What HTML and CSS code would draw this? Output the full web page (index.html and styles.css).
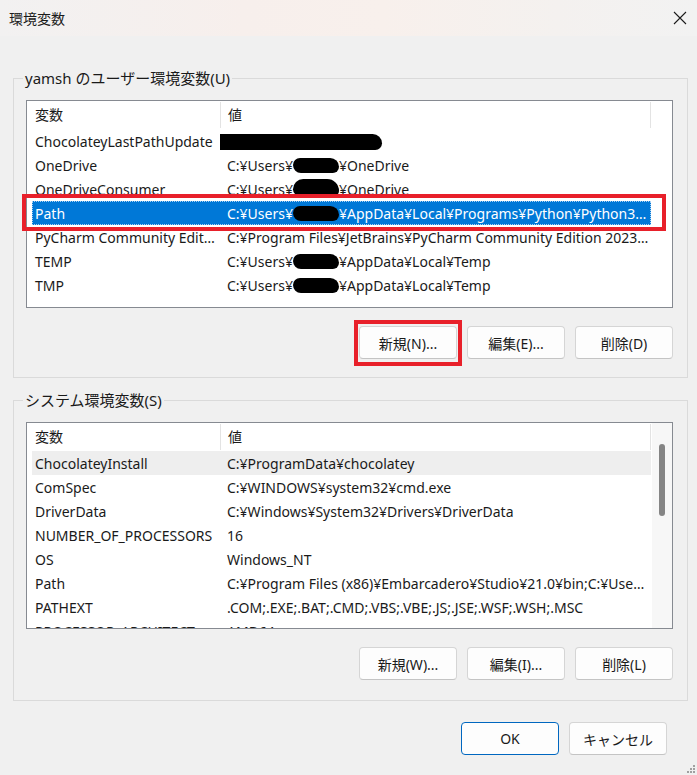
FILE: index.html
```html
<!DOCTYPE html>
<html lang="ja">
<head>
  <meta charset="UTF-8">
  <title>環境変数</title>
  <link rel="stylesheet" href="styles.css">
</head>
<body>

  <!-- タイトルバー -->
  <div class="titlebar">
    <span class="title">環境変数</span>
    <svg class="close" width="14" height="14" viewBox="0 0 14 14">
      <path d="M1 1 L13 13 M13 1 L1 13" stroke="#1b1b1b" stroke-width="1.1" fill="none"/>
    </svg>
  </div>

  <div class="content">

    <!-- ユーザー環境変数 -->
    <fieldset class="group group-user">
      <legend>yamsh のユーザー環境変数(U)</legend>
      <div class="list">
        <div class="list-main">
          <div class="list-head">
            <div class="cell name">変数</div>
            <div class="cell value">値</div>
          </div>
          <div class="row">
            <div class="cell name">ChocolateyLastPathUpdate</div>
            <div class="cell value"><span class="blot blot-wide"></span></div>
          </div>
          <div class="row">
            <div class="cell name">OneDrive</div>
            <div class="cell value">C:¥Users¥<span class="blot"></span>¥OneDrive</div>
          </div>
          <div class="row">
            <div class="cell name">OneDriveConsumer</div>
            <div class="cell value">C:¥Users¥<span class="blot blot-up"></span>¥OneDrive</div>
          </div>
          <div class="row selected marked-row">
            <div class="cell name">Path</div>
            <div class="cell value">C:¥Users¥<span class="blot"></span>¥AppData¥Local¥Programs¥Python¥Python312¥Scripts¥;C:¥Users</div>
          </div>
          <div class="row">
            <div class="cell name">PyCharm Community Edition</div>
            <div class="cell value">C:¥Program Files¥JetBrains¥PyCharm Community Edition 2023.2.1¥bin;</div>
          </div>
          <div class="row">
            <div class="cell name">TEMP</div>
            <div class="cell value">C:¥Users¥<span class="blot"></span>¥AppData¥Local¥Temp</div>
          </div>
          <div class="row">
            <div class="cell name">TMP</div>
            <div class="cell value">C:¥Users¥<span class="blot"></span>¥AppData¥Local¥Temp</div>
          </div>
        </div>
      </div>
      <div class="buttons">
        <button class="btn marked-btn">新規(N)...</button>
        <button class="btn">編集(E)...</button>
        <button class="btn">削除(D)</button>
      </div>
    </fieldset>

    <!-- システム環境変数 -->
    <fieldset class="group">
      <legend>システム環境変数(S)</legend>
      <div class="list list-sys">
        <div class="list-main">
          <div class="list-head">
            <div class="cell name">変数</div>
            <div class="cell value">値</div>
          </div>
          <div class="row hover">
            <div class="cell name">ChocolateyInstall</div>
            <div class="cell value">C:¥ProgramData¥chocolatey</div>
          </div>
          <div class="row">
            <div class="cell name">ComSpec</div>
            <div class="cell value">C:¥WINDOWS¥system32¥cmd.exe</div>
          </div>
          <div class="row">
            <div class="cell name">DriverData</div>
            <div class="cell value">C:¥Windows¥System32¥Drivers¥DriverData</div>
          </div>
          <div class="row">
            <div class="cell name">NUMBER_OF_PROCESSORS</div>
            <div class="cell value">16</div>
          </div>
          <div class="row">
            <div class="cell name">OS</div>
            <div class="cell value">Windows_NT</div>
          </div>
          <div class="row">
            <div class="cell name">Path</div>
            <div class="cell value">C:¥Program Files (x86)¥Embarcadero¥Studio¥21.0¥bin;C:¥Users¥Public¥Documents</div>
          </div>
          <div class="row">
            <div class="cell name">PATHEXT</div>
            <div class="cell value">.COM;.EXE;.BAT;.CMD;.VBS;.VBE;.JS;.JSE;.WSF;.WSH;.MSC</div>
          </div>
          <div class="row">
            <div class="cell name">PROCESSOR_ARCHITECTURE</div>
            <div class="cell value">AMD64</div>
          </div>
        </div>
        <div class="scrollbar">
          <div class="thumb"></div>
        </div>
      </div>
      <div class="buttons">
        <button class="btn">新規(W)...</button>
        <button class="btn">編集(I)...</button>
        <button class="btn">削除(L)</button>
      </div>
    </fieldset>

  </div>

  <!-- OK / キャンセル -->
  <div class="footer">
    <button class="btn btn-default">OK</button>
    <button class="btn">キャンセル</button>
  </div>

  <svg class="grip" width="10" height="10" viewBox="0 0 10 10">
    <rect x="7" y="1" width="2" height="2" fill="#a0a0a0"/>
    <rect x="4" y="4" width="2" height="2" fill="#a0a0a0"/>
    <rect x="7" y="4" width="2" height="2" fill="#a0a0a0"/>
    <rect x="1" y="7" width="2" height="2" fill="#a0a0a0"/>
    <rect x="4" y="7" width="2" height="2" fill="#a0a0a0"/>
    <rect x="7" y="7" width="2" height="2" fill="#a0a0a0"/>
  </svg>

</body>
</html>
```

FILE: styles.css
```css
* {
  margin: 0;
  padding: 0;
  box-sizing: border-box;
}

body {
  font-family: "Noto Sans", "Noto Sans CJK JP", sans-serif;
  font-size: 14px;
  color: #1a1a1a;
  background-color: #f0f0f0;
  width: 697px;
  height: 775px;
  position: relative;
  overflow: hidden;
}

/* タイトルバー */
.titlebar {
  height: 36px;
  display: flex;
  align-items: center;
  justify-content: space-between;
  padding: 0 10px 0 9px;
  background: linear-gradient(90deg, #f2f1f1 0%, #f7efec 35%, #f8f0ec 55%, #f4f1ef 80%, #f2f2f2 100%);
}

.title {
  font-size: 14px;
}

/* グループ枠 */
.content {
  padding: 0 9px 0 13px;
}

.group {
  border: 1px solid #dadada;
  padding: 0 14px 20px 12px;
  margin-top: 32px;
}

.group-user {
  padding-bottom: 18px;
}

.group + .group {
  margin-top: 12px;
}

.group legend {
  font-size: 15px;
  line-height: 20px;
  padding: 0 2px;
  margin-left: -3px;
}

/* リスト */
.list {
  margin-top: 12px;
  height: 208px;
  background-color: #fff;
  border: 1px solid #868a91;
  display: flex;
}

.list-sys {
  height: 207px;
  overflow: hidden;
}

.list-main {
  flex-grow: 1;
  padding-left: 5px;
}

.list-head {
  height: 28px;
  display: flex;
  align-items: center;
}

.list-head .cell {
  height: 26px;
  line-height: 26px;
}

.list-head .value {
  border-left: 1px solid #e3e3e3;
  border-right: 1px solid #e3e3e3;
}

.row {
  width: 619px;
  height: 24px;
  display: flex;
  align-items: center;
  position: relative;
}

.cell {
  white-space: nowrap;
  overflow: hidden;
  text-overflow: ellipsis;
}

.cell.name {
  width: 188px;
  flex-shrink: 0;
  padding: 0 4px 0 3px;
}

.cell.value {
  width: 431px;
  flex-shrink: 0;
  padding: 0 2px 0 7px;
}

.row.selected {
  background-color: #0078d7;
  color: #fff;
  outline: 1px dotted #a8d0f2;
  outline-offset: -1px;
}

.row.hover {
  background-color: #eeeeee;
}

/* 塗りつぶし */
.blot {
  display: inline-block;
  width: 46px;
  height: 15px;
  background-color: #000;
  border-radius: 8px 10px 7px 9px;
  vertical-align: -2px;
}

.blot-up {
  height: 17px;
  border-radius: 12px 14px 6px 8px;
  vertical-align: -1px;
}

.blot-wide {
  width: 167px;
  height: 16px;
  margin-left: -12px;
  border-radius: 9px 14px 10px 8px;
  vertical-align: -3px;
}

/* スクロールバー */
.scrollbar {
  width: 20px;
  flex-shrink: 0;
  background-color: #f7f7f7;
  padding: 21px 6px 0 7px;
}

.thumb {
  height: 72px;
  width: 6px;
  border-radius: 3px;
  background-color: #858585;
}

/* ボタン */
.buttons {
  display: flex;
  justify-content: flex-end;
  gap: 10px;
  margin-top: 18px;
}

.btn {
  width: 98px;
  height: 33px;
  font-family: inherit;
  font-size: 14px;
  color: #1a1a1a;
  background-color: #fdfdfd;
  border: 1px solid #d5d5d5;
  border-bottom-color: #c4c4c4;
  border-radius: 4px;
  position: relative;
}

.btn-default {
  border: 1px solid #0067c0;
}

.footer {
  display: flex;
  justify-content: flex-end;
  gap: 10px;
  margin-top: 21px;
  padding-right: 30px;
}

/* 赤枠 */
.marked-row::after {
  content: "";
  position: absolute;
  top: -7px;
  bottom: -6px;
  left: -10px;
  right: -15px;
  border: 4px solid #e8202a;
}

.marked-btn::after {
  content: "";
  position: absolute;
  top: -7px;
  bottom: -8px;
  left: -6px;
  right: -6px;
  border: 4px solid #e8202a;
}

.grip {
  position: absolute;
  right: 1px;
  bottom: 1px;
}
```
